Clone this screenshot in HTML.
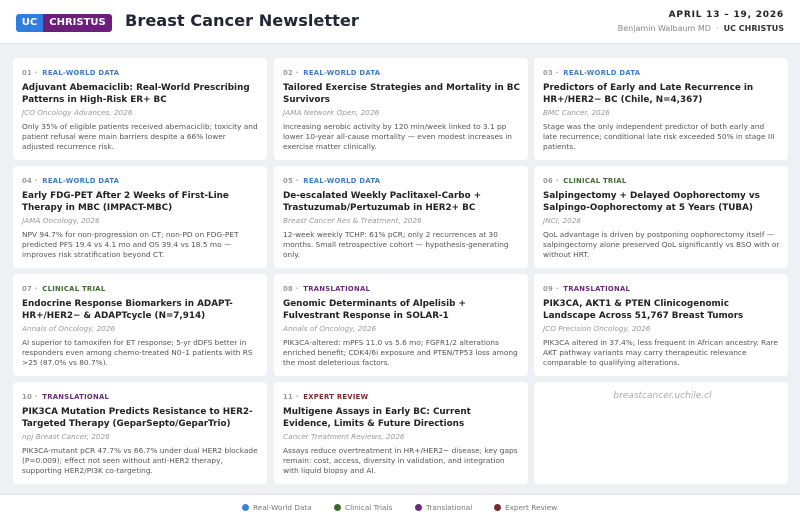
<!DOCTYPE html><html><head><style>
*{margin:0;padding:0;box-sizing:border-box}
body{width:800px;height:519px;background:#eef0f3;font-family:"DejaVu Sans","Liberation Sans",sans-serif;position:relative;overflow:hidden}
.hdr{position:absolute;left:0;top:0;width:800px;height:44px;background:#fff;border-bottom:1px solid #e2e4e8}
.logo{position:absolute;left:16px;top:14px;height:18px;display:flex;border-radius:3px;overflow:hidden;font-weight:bold;font-size:10px;color:#fff;line-height:18px}
.logo .a{background:#2f7de1;width:27px;text-align:center}
.logo .b{background:#6b1f7a;width:69px;text-align:center}
.title{position:absolute;left:125px;top:11px;font-size:16.2px;font-weight:bold;color:#222733}
.date{position:absolute;right:16px;top:10px;font-size:9px;font-weight:bold;letter-spacing:.8px;color:#222}
.by{position:absolute;right:16px;top:24px;font-size:8px;color:#888}
.by b{color:#333}
.card{position:absolute;width:254px;height:102px;background:#fff;border-radius:4px;padding:11px 6px 0 9px;white-space:nowrap;overflow:hidden}
.tag{font-size:6.8px;font-weight:bold;letter-spacing:.3px;color:#999;height:10px}
.tag span{margin-left:2px}
.t{font-size:8.8px;font-weight:bold;color:#222;line-height:12px;margin-top:3px}
.j{font-size:7.3px;font-style:italic;color:#999;margin-top:2px;line-height:10px}
.d{font-size:7.4px;color:#555;line-height:10px;margin-top:4px}
.rw{color:#3a7cc7}.ct{color:#3d6b2a}.tr{color:#6b2a7a}.er{color:#7a2a2a}
.foot{position:absolute;left:0;top:494px;width:800px;height:25px;border-top:1px solid #e2e4e8;background:#fff}
.leg{position:absolute;top:8px;font-size:7.3px;color:#777;display:flex;align-items:center}
.leg i{display:inline-block;width:7px;height:7px;border-radius:50%;margin-right:4px}
</style></head><body>
<div class="hdr">
<div class="logo"><div class="a">UC</div><div class="b">CHRISTUS</div></div>
<div class="title">Breast Cancer Newsletter</div>
<div class="date">APRIL 13 – 19, 2026</div>
<div class="by">Benjamin Walbaum MD &nbsp;·&nbsp; <b>UC CHRISTUS</b></div>
</div>

<div class="card" style="left:13px;top:58px"><div class="tag">01 · <span class="rw">REAL-WORLD DATA</span></div><div class="t">Adjuvant Abemaciclib: Real-World Prescribing<br>Patterns in High-Risk ER+ BC</div><div class="j">JCO Oncology Advances, 2026</div><div class="d">Only 35% of eligible patients received abemaciclib; toxicity and<br>patient refusal were main barriers despite a 66% lower<br>adjusted recurrence risk.</div></div>
<div class="card" style="left:274px;top:58px"><div class="tag">02 · <span class="rw">REAL-WORLD DATA</span></div><div class="t">Tailored Exercise Strategies and Mortality in BC<br>Survivors</div><div class="j">JAMA Network Open, 2026</div><div class="d">Increasing aerobic activity by 120 min/week linked to 3.1 pp<br>lower 10-year all-cause mortality — even modest increases in<br>exercise matter clinically.</div></div>
<div class="card" style="left:534px;top:58px"><div class="tag">03 · <span class="rw">REAL-WORLD DATA</span></div><div class="t">Predictors of Early and Late Recurrence in<br>HR+/HER2− BC (Chile, N=4,367)</div><div class="j">BMC Cancer, 2026</div><div class="d">Stage was the only independent predictor of both early and<br>late recurrence; conditional late risk exceeded 50% in stage III<br>patients.</div></div>

<div class="card" style="left:13px;top:166px"><div class="tag">04 · <span class="rw">REAL-WORLD DATA</span></div><div class="t">Early FDG-PET After 2 Weeks of First-Line<br>Therapy in MBC (IMPACT-MBC)</div><div class="j">JAMA Oncology, 2026</div><div class="d">NPV 94.7% for non-progression on CT; non-PD on FDG-PET<br>predicted PFS 19.4 vs 4.1 mo and OS 39.4 vs 18.5 mo —<br>improves risk stratification beyond CT.</div></div>
<div class="card" style="left:274px;top:166px"><div class="tag">05 · <span class="rw">REAL-WORLD DATA</span></div><div class="t">De-escalated Weekly Paclitaxel-Carbo +<br>Trastuzumab/Pertuzumab in HER2+ BC</div><div class="j">Breast Cancer Res &amp; Treatment, 2026</div><div class="d">12-week weekly TCHP: 61% pCR; only 2 recurrences at 30<br>months. Small retrospective cohort — hypothesis-generating<br>only.</div></div>
<div class="card" style="left:534px;top:166px"><div class="tag">06 · <span class="ct">CLINICAL TRIAL</span></div><div class="t">Salpingectomy + Delayed Oophorectomy vs<br>Salpingo-Oophorectomy at 5 Years (TUBA)</div><div class="j">JNCI, 2026</div><div class="d">QoL advantage is driven by postponing oophorectomy itself —<br>salpingectomy alone preserved QoL significantly vs BSO with or<br>without HRT.</div></div>

<div class="card" style="left:13px;top:274px"><div class="tag">07 · <span class="ct">CLINICAL TRIAL</span></div><div class="t">Endocrine Response Biomarkers in ADAPT-<br>HR+/HER2− &amp; ADAPTcycle (N=7,914)</div><div class="j">Annals of Oncology, 2026</div><div class="d">AI superior to tamoxifen for ET response; 5-yr dDFS better in<br>responders even among chemo-treated N0–1 patients with RS<br>&gt;25 (87.0% vs 80.7%).</div></div>
<div class="card" style="left:274px;top:274px"><div class="tag">08 · <span class="tr">TRANSLATIONAL</span></div><div class="t">Genomic Determinants of Alpelisib +<br>Fulvestrant Response in SOLAR-1</div><div class="j">Annals of Oncology, 2026</div><div class="d">PIK3CA-altered: mPFS 11.0 vs 5.6 mo; FGFR1/2 alterations<br>enriched benefit; CDK4/6i exposure and PTEN/TP53 loss among<br>the most deleterious factors.</div></div>
<div class="card" style="left:534px;top:274px"><div class="tag">09 · <span class="tr">TRANSLATIONAL</span></div><div class="t">PIK3CA, AKT1 &amp; PTEN Clinicogenomic<br>Landscape Across 51,767 Breast Tumors</div><div class="j">JCO Precision Oncology, 2026</div><div class="d">PIK3CA altered in 37.4%; less frequent in African ancestry. Rare<br>AKT pathway variants may carry therapeutic relevance<br>comparable to qualifying alterations.</div></div>

<div class="card" style="left:13px;top:382px"><div class="tag">10 · <span class="tr">TRANSLATIONAL</span></div><div class="t">PIK3CA Mutation Predicts Resistance to HER2-<br>Targeted Therapy (GeparSepto/GeparTrio)</div><div class="j">npj Breast Cancer, 2026</div><div class="d">PIK3CA-mutant pCR 47.7% vs 66.7% under dual HER2 blockade<br>(P=0.009); effect not seen without anti-HER2 therapy,<br>supporting HER2/PI3K co-targeting.</div></div>
<div class="card" style="left:274px;top:382px"><div class="tag">11 · <span class="er">EXPERT REVIEW</span></div><div class="t">Multigene Assays in Early BC: Current<br>Evidence, Limits &amp; Future Directions</div><div class="j">Cancer Treatment Reviews, 2026</div><div class="d">Assays reduce overtreatment in HR+/HER2− disease; key gaps<br>remain: cost, access, diversity in validation, and integration<br>with liquid biopsy and AI.</div></div>
<div class="card" style="left:534px;top:382px;text-align:center"><div style="font-size:9px;font-style:italic;color:#aaa;margin-top:-2px">breastcancer.uchile.cl</div></div>

<div class="foot">
<div class="leg" style="left:242px"><i style="background:#3a84d6"></i>Real-World Data</div>
<div class="leg" style="left:334px"><i style="background:#3d6b2a"></i>Clinical Trials</div>
<div class="leg" style="left:415px"><i style="background:#6b2a7a"></i>Translational</div>
<div class="leg" style="left:494px"><i style="background:#7a2a2a"></i>Expert Review</div>
</div>
</body></html>
